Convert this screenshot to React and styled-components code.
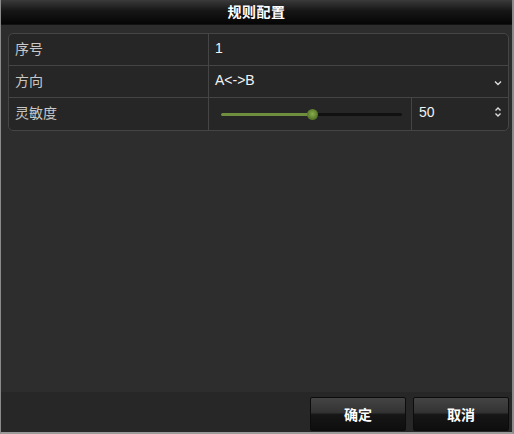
import React from 'react'
import styled, { createGlobalStyle } from 'styled-components'

const Global = createGlobalStyle`
  html, body { margin: 0; padding: 0; background: #2c2c2c; }
  body { font-family: "Liberation Sans", "Noto Sans CJK SC", sans-serif; }
`

const Window = styled.div`
  width: 514px;
  height: 434px;
  box-sizing: border-box;
  border-left: 1px solid #8a8a8a;
  border-right: 2px solid #8a8a8a;
  border-bottom: 2px solid #9a9a9a;
  background: #2d2d2d;
  display: flex;
  flex-direction: column;
`

const TitleBar = styled.div`
  height: 25px;
  flex: none;
  display: flex;
  align-items: center;
  justify-content: center;
  background: linear-gradient(#3a3a3a 0%, #161616 45%, #050505 100%);
  border-bottom: 1px solid #111;
  color: #fff;
  font-size: 14px;
  font-weight: bold;
  font-family: "Noto Sans CJK SC", sans-serif;
  letter-spacing: 0.5px;
  padding-bottom: 2px;
  box-sizing: border-box;
`

const Body = styled.div`
  flex: 1;
  padding: 8px 3px 0 7px;
`

const Table = styled.div`
  border: 1px solid #454545;
  border-radius: 5px;
  display: grid;
  grid-template-columns: 200px 1fr;
  background: #262626;
  overflow: hidden;
`

const Label = styled.div`
  height: 32px;
  display: flex;
  align-items: center;
  padding-left: 6px;
  padding-bottom: 4px;
  box-sizing: border-box;
  color: #c8c8c8;
  font-size: 14px;
  font-family: "Noto Sans CJK SC", sans-serif;
  border-right: 1px solid #454545;
  border-bottom: ${p => (p.$last ? 'none' : '1px solid #454545')};
`

const Value = styled.div`
  height: 32px;
  box-sizing: border-box;
  display: flex;
  align-items: center;
  padding-left: ${p => (p.$flush ? '0' : '6px')};
  padding-right: 6px;
  padding-bottom: ${p => (p.$flush ? '0' : '4px')};
  color: #f2f2f2;
  font-size: 14px;
  border-bottom: ${p => (p.$last ? 'none' : '1px solid #454545')};
  justify-content: space-between;
`

const SliderCell = styled.div`
  width: 203px;
  height: 100%;
  display: flex;
  align-items: center;
  padding: 0 9px 0 12px;
  box-sizing: border-box;
  border-right: 1px solid #454545;
`

const Track = styled.div`
  flex: 1;
  height: 3px;
  background: #111;
  border-radius: 2px;
  position: relative;
`

const Fill = styled.div`
  height: 3px;
  background: #6f8f3e;
  border-radius: 2px;
`

const Thumb = styled.div`
  position: absolute;
  top: -4px;
  width: 11px;
  height: 11px;
  margin-left: -5px;
  border-radius: 50%;
  background: radial-gradient(circle at 50% 45%, #88ad4c 0%, #5a7a2c 60%, #3d5520 100%);
`

const Spin = styled.div`
  flex: 1;
  display: flex;
  align-items: center;
  justify-content: space-between;
  padding-left: 7px;
  padding-bottom: 4px;
  font-size: 14px;
`

const Footer = styled.div`
  height: 40px;
  flex: none;
  box-sizing: border-box;
  display: flex;
  justify-content: flex-end;
  align-items: flex-start;
  gap: 7px;
  padding: 5px 3px 0 0;
  background: #272727;
`

const Button = styled.button`
  width: 96px;
  height: 34px;
  border: 1px solid #0c0c0c;
  border-radius: 2px;
  background: linear-gradient(#444 0%, #333 45%, #161616 52%, #0e0e0e 100%);
  color: #fff;
  font-size: 14px;
  font-weight: bold;
  font-family: "Noto Sans CJK SC", sans-serif;
  padding: 0;
`

const value = 50

export default function App() {
  return (
    <>
      <Global />
      <Window>
        <TitleBar>规则配置</TitleBar>
        <Body>
          <Table>
            <Label>序号</Label>
            <Value>1</Value>
            <Label>方向</Label>
            <Value>
              A&lt;-&gt;B
              <svg width="8" height="6" viewBox="0 0 8 6" style={{ marginTop: 6 }}>
                <path d="M1 1.5 L4 4.5 L7 1.5" stroke="#ddd" strokeWidth="1.4" fill="none" />
              </svg>
            </Value>
            <Label $last>灵敏度</Label>
            <Value $last $flush>
              <SliderCell>
                <Track>
                  <Fill style={{ width: `${value}%` }} />
                  <Thumb style={{ left: `${value}%` }} />
                </Track>
              </SliderCell>
              <Spin>
                50
                <svg width="8" height="12" viewBox="0 0 8 12">
                  <path d="M1.5 4.5 L4 2 L6.5 4.5 M1.5 7.5 L4 10 L6.5 7.5" stroke="#ddd" strokeWidth="1.4" fill="none" />
                </svg>
              </Spin>
            </Value>
          </Table>
        </Body>
        <Footer>
          <Button>确定</Button>
          <Button>取消</Button>
        </Footer>
      </Window>
    </>
  )
}
